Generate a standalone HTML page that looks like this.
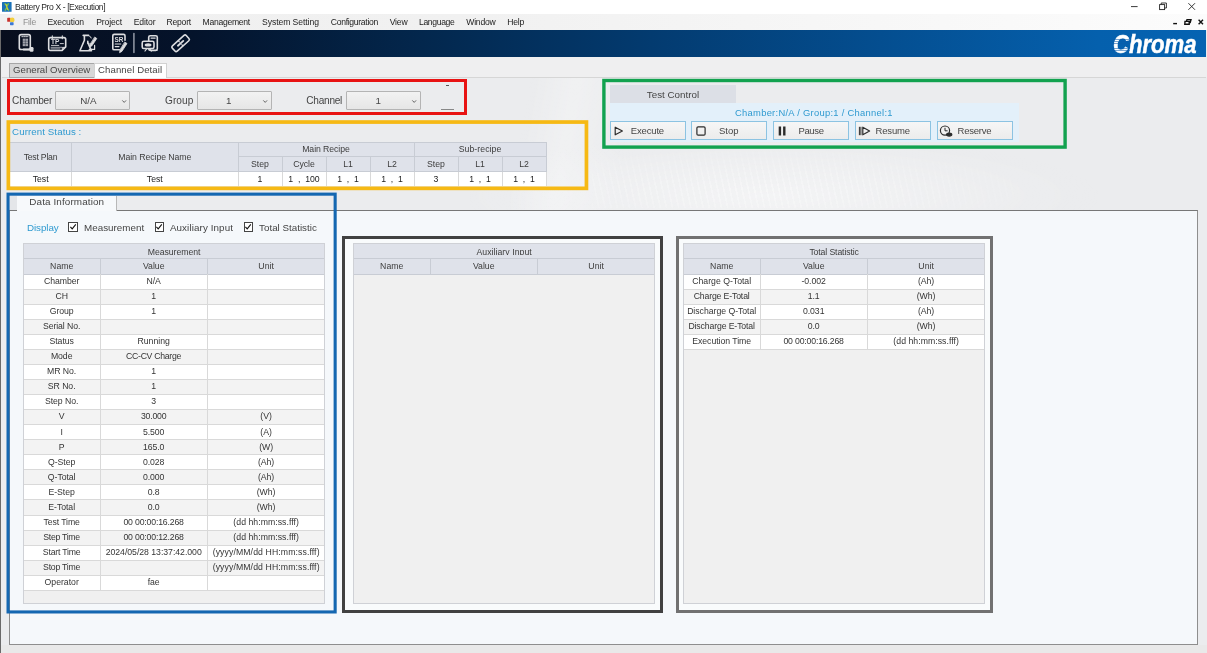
<!DOCTYPE html>
<html lang="en"><head><meta charset="utf-8"><title>Battery Pro X - [Execution]</title>
<style>
html,body{margin:0;padding:0}
body{width:1207px;height:653px;overflow:hidden;position:relative;background:#ebecee;font-family:"Liberation Sans", sans-serif;}
.a{position:absolute;box-sizing:border-box}
.t{position:absolute;white-space:pre;line-height:1;margin:0}
svg{position:absolute;overflow:visible}
</style></head><body>
<div class="a" style="left:0;top:0;width:1207px;height:653px;will-change:transform">
<div class="a" style="left:0px;top:0px;width:1207px;height:14px;background:#ffffff;"></div>
<svg style="left:1.5px;top:1.8px" width="9.6" height="9.8" viewBox="0 0 96 98"><rect width="96" height="98" rx="6" fill="#1b72b8"/><path d="M28 14 L48 44 L66 14 M30 86 L48 54 L68 86" stroke="#7fc63f" stroke-width="13" fill="none"/><path d="M40 20 L58 80" stroke="#f2d23a" stroke-width="8"/></svg>
<div class="a" style="left:0px;top:14px;width:1207px;height:16px;background:linear-gradient(90deg,#f0f0f0 0%,#f1f1f1 40%,#fcfcfc 100%);"></div>
<svg style="left:0;top:0" width="1207" height="30" viewBox="0 0 1207 30" fill="none" stroke="#222" stroke-width="0.9"><path d="M1131 6.6H1137.6"/><rect x="1159.6" y="4.6" width="5" height="5"/><path d="M1161.2 4.6V3H1166.4V8H1164.6"/><path d="M1188.4 3.2L1195 9.8M1195 3.2L1188.4 9.8"/><g stroke="#111" stroke-width="1.4"><path d="M1173.2 23.6H1177"/><path d="M1185 21.4h4.2v2.8h-4.4z M1186.4 21.2l.6-1.6h4l-.8 3h-1"/><path d="M1198.6 19.8l4.4 4.4M1203 19.8l-4.4 4.4"/></g></svg>
<svg style="left:6.5px;top:17.4px" width="8" height="9" viewBox="0 0 80 90"><rect x="2" y="8" width="34" height="40" rx="6" fill="#c9302c"/><circle cx="52" cy="30" r="24" fill="#f3cf3c"/><rect x="30" y="52" width="36" height="30" rx="6" fill="#3b78d6"/></svg>
<div class="a" style="left:1px;top:30px;width:1205px;height:27px;background:linear-gradient(90deg,#080e1d 0%,#04132b 16%,#03274d 35%,#033b70 54%,#044e90 73%,#0560ad 91%,#0563b2 100%);"></div>
<svg style="left:0;top:0" width="200" height="60" viewBox="0 0 200 60" fill="none" stroke="#dcdde0" stroke-width="1.6" stroke-linejoin="round" stroke-linecap="round">
<!-- icon1: sheet with plug -->
<rect x="19.3" y="34.6" width="11" height="14.9" rx="1.8"/>
<rect x="22.7" y="38.6" width="5.4" height="7.6" fill="#dcdde0" stroke="none" opacity=".72"/>
<path d="M22.7 41.2h5.4M22.7 43.6h5.4M25.4 38.6v7.6" stroke="#0a1428" stroke-width=".5" opacity=".7"/>
<path d="M21.8 36.7h6.2" stroke-width="1" stroke-dasharray="1 .9"/>
<path d="M23.6 49.5h6.6" stroke-width="1.8"/><rect x="29.6" y="47.1" width="3.9" height="4.6" rx="1.2" fill="#dcdde0" stroke="none"/>
<!-- icon2: TP card -->
<path d="M50.4 37.6h13.6q1.7 0 1.7 1.7v7.6l-3.6 3.6H50.4q-1.7 0-1.7-1.7v-9.5q0-1.7 1.7-1.7z"/>
<path d="M52.3 35.8v3M62.3 35.8v3" stroke-width="1.1"/>
<path d="M51.4 45.4h7.4M60.2 43.6h3.2" stroke-width=".9"/>
<path d="M51 47.3h10.6M51 48.9h9" stroke-width=".9" opacity=".8"/>
<path d="M62.3 50.2v-2.8h3" stroke-width="1"/>
<!-- icon3: flask + pen + box -->
<path d="M83.2 35.4h5.4M84.4 35.8v4.4L79.9 50.8h11.6L87.8 42.6v-1.4" />
<path d="M89.6 36.2q1.4 .2 1.6 1.8" stroke-width="1"/>
<path d="M95 37.2l1.8 1.3-5 7.4-2.2 1 .4-2.3z" fill="#dcdde0" stroke-width=".8"/>
<path d="M89 43.4h-1.2M94.6 45.4v4h-5.4" stroke-width="1.2"/>
<!-- icon4: SR doc + pen -->
<path d="M125 40.2v-4.4q0-1.4-1.4-1.4h-9.4q-1.4 0-1.4 1.4v12.6q0 1.4 1.4 1.4h5.2"/>
<path d="M115.2 44h5.6M115.2 46.6h3.8" stroke-width="1.1"/>
<path d="M125 42.2l2 1.3-5 7.8-2.4 1.4.4-2.7z" fill="#dcdde0" stroke-width=".8"/>
<!-- separator -->
<path d="M133.9 33.6v18.8" stroke="#8b92a0" stroke-width="1.6"/>
<!-- icon5: device link -->
<rect x="148.7" y="35.7" width="8.6" height="14.7" rx="1.6"/>
<path d="M151 38.1h4.2" stroke-width="1.1"/>
<rect x="142.2" y="41.3" width="11.8" height="7.2" rx="1.6" fill="#0a1428"/>
<ellipse cx="148.1" cy="44.9" rx="3.4" ry="1.7" fill="#dcdde0" stroke="none"/>
<path d="M146.8 48.7l-1.8 2.3M149.6 48.7l1.8 2.3M154 50.5h3" stroke-width="1.2"/>
<!-- icon6: chain link -->
<g transform="rotate(-42 180.6 43.3)"><rect x="171.2" y="39.7" width="18.8" height="7.2" rx="1.6"/><path d="M177 43.3h7.2" stroke-width="1.9"/><path d="M180.6 39.9v1.6M180.6 45.1v1.6" stroke-width="1.1"/></g>
<text x="55.2" y="44.4" font-family="Liberation Sans, sans-serif" font-size="6.6" font-weight="bold" fill="#dcdde0" stroke="none" text-anchor="middle">TP</text>
<text x="119" y="41.8" font-family="Liberation Sans, sans-serif" font-size="6.4" font-weight="bold" fill="#dcdde0" stroke="none" text-anchor="middle">SR</text>
</svg>
<div class="a" style="left:1112px;top:35px;width:17.5px;height:19px;z-index:5;background:repeating-linear-gradient(180deg,rgba(11,92,170,0) 0,rgba(11,92,170,0) 1.5px,rgba(11,92,170,.55) 1.5px,rgba(11,92,170,.55) 2.3px)"></div>
<div class="a" style="left:0px;top:30px;width:1.3px;height:623px;background:#6a6a6a;"></div>
<div class="a" style="left:1.3px;top:57px;width:1206px;height:20px;background:#efeff0;"></div>
<div class="a" style="left:470px;top:78px;width:737px;height:132px;background:radial-gradient(ellipse 330px 60px at 300px 118px,rgba(255,255,255,.42),rgba(255,255,255,0) 100%),linear-gradient(100deg,rgba(255,255,255,0) 8%,rgba(255,255,255,.28) 14%,rgba(255,255,255,0) 22%)"></div>
<div class="a" style="left:2px;top:77px;width:1204px;height:1px;background:#d6d6d6;"></div>
<div class="a" style="left:9px;top:63px;width:85.5px;height:14.5px;background:#d7d7d7;border:1px solid #a6a6a6;"></div>
<div class="a" style="left:94px;top:63px;width:72.5px;height:15px;background:#ffffff;border:1px solid #d2d2d2;border-bottom:none;"></div>
<div class="a" style="left:592px;top:150px;width:520px;height:58px;background:repeating-linear-gradient(78deg,rgba(255,255,255,.33) 0,rgba(255,255,255,.33) 1.6px,rgba(255,255,255,0) 1.6px,rgba(255,255,255,0) 6px);-webkit-mask-image:radial-gradient(ellipse 300px 46px at 170px 40px,#000 0%,rgba(0,0,0,.5) 55%,transparent 100%);mask-image:radial-gradient(ellipse 300px 46px at 170px 40px,#000 0%,rgba(0,0,0,.5) 55%,transparent 100%)"></div>
<div class="a" style="left:55.4px;top:91.2px;width:75px;height:19px;background:linear-gradient(180deg,#f2f2f2,#e6e6e6);border:1px solid #b4b4b4;border-radius:1px;"></div>
<svg style="left:121.60000000000001px;top:99.5px" width="4.4" height="3" viewBox="0 0 44 30"><path d="M3 4L22 24L41 4" fill="none" stroke="#444" stroke-width="8"/></svg>
<div class="a" style="left:197px;top:91.2px;width:74.5px;height:19px;background:linear-gradient(180deg,#f2f2f2,#e6e6e6);border:1px solid #b4b4b4;border-radius:1px;"></div>
<svg style="left:262.7px;top:99.5px" width="4.4" height="3" viewBox="0 0 44 30"><path d="M3 4L22 24L41 4" fill="none" stroke="#444" stroke-width="8"/></svg>
<div class="a" style="left:345.5px;top:91.2px;width:75.3px;height:19px;background:linear-gradient(180deg,#f2f2f2,#e6e6e6);border:1px solid #b4b4b4;border-radius:1px;"></div>
<svg style="left:412.0px;top:99.5px" width="4.4" height="3" viewBox="0 0 44 30"><path d="M3 4L22 24L41 4" fill="none" stroke="#444" stroke-width="8"/></svg>
<div class="a" style="left:446px;top:85px;width:3.4px;height:0.8px;background:#555;"></div>
<div class="a" style="left:441px;top:109px;width:13px;height:0.8px;background:#888;"></div>
<div class="a" style="left:7px;top:79px;width:460px;height:36px;border:3px solid #e81313;"></div>
<div class="a" style="left:10.2px;top:141.7px;width:536.8px;height:30px;background:#dfe2ea;"></div>
<div class="a" style="left:10.2px;top:171.5px;width:536.8px;height:14.6px;background:#ffffff;"></div>
<div class="a" style="left:10.2px;top:141.7px;width:536.8px;height:0.9px;background:#c8ccd4;"></div>
<div class="a" style="left:238px;top:156.2px;width:309px;height:0.9px;background:#c8ccd4;"></div>
<div class="a" style="left:10.2px;top:171.2px;width:536.8px;height:0.9px;background:#c8ccd4;"></div>
<div class="a" style="left:70.7px;top:141.7px;width:1px;height:29.80000000000001px;background:#c8ccd4;"></div>
<div class="a" style="left:70.7px;top:171.5px;width:1px;height:14.6px;background:#d9d9d9;"></div>
<div class="a" style="left:237.5px;top:141.7px;width:1px;height:29.80000000000001px;background:#c8ccd4;"></div>
<div class="a" style="left:237.5px;top:171.5px;width:1px;height:14.6px;background:#d9d9d9;"></div>
<div class="a" style="left:281.5px;top:156.4px;width:1px;height:15.099999999999994px;background:#c8ccd4;"></div>
<div class="a" style="left:281.5px;top:171.5px;width:1px;height:14.6px;background:#d9d9d9;"></div>
<div class="a" style="left:325.5px;top:156.4px;width:1px;height:15.099999999999994px;background:#c8ccd4;"></div>
<div class="a" style="left:325.5px;top:171.5px;width:1px;height:14.6px;background:#d9d9d9;"></div>
<div class="a" style="left:369.5px;top:156.4px;width:1px;height:15.099999999999994px;background:#c8ccd4;"></div>
<div class="a" style="left:369.5px;top:171.5px;width:1px;height:14.6px;background:#d9d9d9;"></div>
<div class="a" style="left:413.5px;top:141.7px;width:1px;height:29.80000000000001px;background:#c8ccd4;"></div>
<div class="a" style="left:413.5px;top:171.5px;width:1px;height:14.6px;background:#d9d9d9;"></div>
<div class="a" style="left:457.5px;top:156.4px;width:1px;height:15.099999999999994px;background:#c8ccd4;"></div>
<div class="a" style="left:457.5px;top:171.5px;width:1px;height:14.6px;background:#d9d9d9;"></div>
<div class="a" style="left:501.5px;top:156.4px;width:1px;height:15.099999999999994px;background:#c8ccd4;"></div>
<div class="a" style="left:501.5px;top:171.5px;width:1px;height:14.6px;background:#d9d9d9;"></div>
<div class="a" style="left:545.9px;top:141.7px;width:1px;height:29.80000000000001px;background:#c8ccd4;"></div>
<div class="a" style="left:545.9px;top:171.5px;width:1px;height:14.6px;background:#d9d9d9;"></div>
<svg style="left:0;top:0" width="1207" height="653" viewBox="0 0 1207 653" fill="none"><rect x="8.35" y="122.05" width="578.1" height="66.3" stroke="#f6b914" stroke-width="3.7"/></svg>
<div class="a" style="left:610px;top:85px;width:126px;height:18px;background:#dcdfe6;"></div>
<div class="a" style="left:610px;top:103px;width:408.5px;height:38.6px;background:#e3f0fa;"></div>
<div class="a" style="left:609.5px;top:121.2px;width:76px;height:19px;background:linear-gradient(180deg,#f6f6f6,#ececec);border:1px solid #8cc3e2;"></div>
<div class="a" style="left:691.25px;top:121.2px;width:76px;height:19px;background:linear-gradient(180deg,#f6f6f6,#ececec);border:1px solid #8cc3e2;"></div>
<div class="a" style="left:773px;top:121.2px;width:76px;height:19px;background:linear-gradient(180deg,#f6f6f6,#ececec);border:1px solid #8cc3e2;"></div>
<div class="a" style="left:854.75px;top:121.2px;width:76px;height:19px;background:linear-gradient(180deg,#f6f6f6,#ececec);border:1px solid #8cc3e2;"></div>
<div class="a" style="left:936.5px;top:121.2px;width:76px;height:19px;background:linear-gradient(180deg,#f6f6f6,#ececec);border:1px solid #8cc3e2;"></div>
<svg style="left:0;top:0" width="1207" height="160" viewBox="0 0 1207 160" fill="none" stroke="#2b2b2b" stroke-width="1.2" stroke-linejoin="round">
<path d="M615.2 127.2v7.6l7.2-3.8z"/>
<rect x="696.9" y="126.9" width="8.2" height="8.2" rx="1.2"/>
<path d="M779.9 126.6v8.8M784.3 126.6v8.8" stroke-width="2.4"/>
<path d="M859.4 126.8v8.4M860.9 126.8v8.4" stroke-width="1"/><path d="M862.8 127.2v7.6l6.8-3.8z"/>
<circle cx="945" cy="130.6" r="4.6"/><path d="M945 127.8v3h2.6" stroke-width="1"/><ellipse cx="949.2" cy="134.6" rx="2.6" ry="1.5" fill="#2b2b2b"/>
</svg>
<svg style="left:0;top:0" width="1207" height="653" viewBox="0 0 1207 653" fill="none"><rect x="603.9" y="80.5" width="461.2" height="66.6" stroke="#12a24f" stroke-width="3.4"/></svg>
<div class="a" style="left:9px;top:210px;width:1189.4px;height:434.8px;background:#f5f8fb;border:1px solid #8e8e8e;border-top-color:#777;"></div>
<div class="a" style="left:10px;top:195.7px;width:7px;height:14.6px;background:#e4e6e9;"></div>
<div class="a" style="left:16.7px;top:195.7px;width:100px;height:15.3px;background:#f7f9fb;border-right:1px solid #b8b8b8;"></div>
<div class="a" style="left:68.4px;top:222.4px;width:9.2px;height:9.2px;background:#fff;border:1px solid #444;"></div>
<svg style="left:70.0px;top:224.2px" width="6.2" height="5.6" viewBox="0 0 62 56"><path d="M4 28L22 48L58 4" fill="none" stroke="#111" stroke-width="11"/></svg>
<div class="a" style="left:154.6px;top:222.4px;width:9.2px;height:9.2px;background:#fff;border:1px solid #444;"></div>
<svg style="left:156.2px;top:224.2px" width="6.2" height="5.6" viewBox="0 0 62 56"><path d="M4 28L22 48L58 4" fill="none" stroke="#111" stroke-width="11"/></svg>
<div class="a" style="left:243.8px;top:222.4px;width:9.2px;height:9.2px;background:#fff;border:1px solid #444;"></div>
<svg style="left:245.4px;top:224.2px" width="6.2" height="5.6" viewBox="0 0 62 56"><path d="M4 28L22 48L58 4" fill="none" stroke="#111" stroke-width="11"/></svg>
<div class="a" style="left:341.8px;top:235.8px;width:321.4px;height:377.5px;background:#f9fbfc;border:3px solid #414141;"></div>
<div class="a" style="left:676px;top:235.8px;width:316.6px;height:377.5px;background:#f9fbfc;border:3px solid #717171;"></div>
<div class="a" style="left:23.4px;top:243.4px;width:301.4px;height:360.20000000000005px;background:#f0f0f0;"></div>
<div class="a" style="left:23.4px;top:243.4px;width:301.4px;height:30.799999999999983px;background:#dfe2ea;"></div>
<div class="a" style="left:23.4px;top:274.2px;width:301.4px;height:15.05px;background:#ffffff;"></div>
<div class="a" style="left:23.4px;top:289.25px;width:301.4px;height:15.05px;background:#f3f3f3;"></div>
<div class="a" style="left:23.4px;top:304.3px;width:301.4px;height:15.05px;background:#ffffff;"></div>
<div class="a" style="left:23.4px;top:319.35px;width:301.4px;height:15.05px;background:#f3f3f3;"></div>
<div class="a" style="left:23.4px;top:334.4px;width:301.4px;height:15.05px;background:#ffffff;"></div>
<div class="a" style="left:23.4px;top:349.45px;width:301.4px;height:15.05px;background:#f3f3f3;"></div>
<div class="a" style="left:23.4px;top:364.5px;width:301.4px;height:15.05px;background:#ffffff;"></div>
<div class="a" style="left:23.4px;top:379.55px;width:301.4px;height:15.05px;background:#f3f3f3;"></div>
<div class="a" style="left:23.4px;top:394.6px;width:301.4px;height:15.05px;background:#ffffff;"></div>
<div class="a" style="left:23.4px;top:409.65px;width:301.4px;height:15.05px;background:#f3f3f3;"></div>
<div class="a" style="left:23.4px;top:424.7px;width:301.4px;height:15.05px;background:#ffffff;"></div>
<div class="a" style="left:23.4px;top:439.75px;width:301.4px;height:15.05px;background:#f3f3f3;"></div>
<div class="a" style="left:23.4px;top:454.8px;width:301.4px;height:15.05px;background:#ffffff;"></div>
<div class="a" style="left:23.4px;top:469.85px;width:301.4px;height:15.05px;background:#f3f3f3;"></div>
<div class="a" style="left:23.4px;top:484.9px;width:301.4px;height:15.05px;background:#ffffff;"></div>
<div class="a" style="left:23.4px;top:499.95px;width:301.4px;height:15.05px;background:#f3f3f3;"></div>
<div class="a" style="left:23.4px;top:515.0px;width:301.4px;height:15.05px;background:#ffffff;"></div>
<div class="a" style="left:23.4px;top:530.05px;width:301.4px;height:15.05px;background:#f3f3f3;"></div>
<div class="a" style="left:23.4px;top:545.1px;width:301.4px;height:15.05px;background:#ffffff;"></div>
<div class="a" style="left:23.4px;top:560.15px;width:301.4px;height:15.05px;background:#f3f3f3;"></div>
<div class="a" style="left:23.4px;top:575.2px;width:301.4px;height:15.05px;background:#ffffff;"></div>
<div class="a" style="left:23.4px;top:258.3px;width:301.4px;height:1px;background:#c8ccd4;"></div>
<div class="a" style="left:23.4px;top:273.7px;width:301.4px;height:1px;background:#c8ccd4;"></div>
<div class="a" style="left:99.5px;top:258.8px;width:1px;height:15.399999999999977px;background:#c8ccd4;"></div>
<div class="a" style="left:99.5px;top:274.2px;width:1px;height:316.05px;background:#d9d9d9;"></div>
<div class="a" style="left:206.9px;top:258.8px;width:1px;height:15.399999999999977px;background:#c8ccd4;"></div>
<div class="a" style="left:206.9px;top:274.2px;width:1px;height:316.05px;background:#d9d9d9;"></div>
<div class="a" style="left:23.4px;top:288.75px;width:301.4px;height:1px;background:#d9d9d9;"></div>
<div class="a" style="left:23.4px;top:303.8px;width:301.4px;height:1px;background:#d9d9d9;"></div>
<div class="a" style="left:23.4px;top:318.85px;width:301.4px;height:1px;background:#d9d9d9;"></div>
<div class="a" style="left:23.4px;top:333.9px;width:301.4px;height:1px;background:#d9d9d9;"></div>
<div class="a" style="left:23.4px;top:348.95px;width:301.4px;height:1px;background:#d9d9d9;"></div>
<div class="a" style="left:23.4px;top:364.0px;width:301.4px;height:1px;background:#d9d9d9;"></div>
<div class="a" style="left:23.4px;top:379.05px;width:301.4px;height:1px;background:#d9d9d9;"></div>
<div class="a" style="left:23.4px;top:394.1px;width:301.4px;height:1px;background:#d9d9d9;"></div>
<div class="a" style="left:23.4px;top:409.15px;width:301.4px;height:1px;background:#d9d9d9;"></div>
<div class="a" style="left:23.4px;top:424.2px;width:301.4px;height:1px;background:#d9d9d9;"></div>
<div class="a" style="left:23.4px;top:439.25px;width:301.4px;height:1px;background:#d9d9d9;"></div>
<div class="a" style="left:23.4px;top:454.3px;width:301.4px;height:1px;background:#d9d9d9;"></div>
<div class="a" style="left:23.4px;top:469.35px;width:301.4px;height:1px;background:#d9d9d9;"></div>
<div class="a" style="left:23.4px;top:484.4px;width:301.4px;height:1px;background:#d9d9d9;"></div>
<div class="a" style="left:23.4px;top:499.45px;width:301.4px;height:1px;background:#d9d9d9;"></div>
<div class="a" style="left:23.4px;top:514.5px;width:301.4px;height:1px;background:#d9d9d9;"></div>
<div class="a" style="left:23.4px;top:529.55px;width:301.4px;height:1px;background:#d9d9d9;"></div>
<div class="a" style="left:23.4px;top:544.6px;width:301.4px;height:1px;background:#d9d9d9;"></div>
<div class="a" style="left:23.4px;top:559.65px;width:301.4px;height:1px;background:#d9d9d9;"></div>
<div class="a" style="left:23.4px;top:574.7px;width:301.4px;height:1px;background:#d9d9d9;"></div>
<div class="a" style="left:23.4px;top:589.75px;width:301.4px;height:1px;background:#d9d9d9;"></div>
<div class="a" style="left:22.9px;top:242.9px;width:302.4px;height:361.20000000000005px;border:1px solid #cfd1d6;"></div>
<div class="a" style="left:23.4px;top:244.4px;width:301.4px;height:11.10px;overflow:hidden"><span class="t" style="left:0;width:100%;text-align:center;top:3.24px;font-size:8.7px;color:#3c3c3c;letter-spacing:-0.05px">Measurement</span></div>
<div class="a" style="left:353.4px;top:243.4px;width:301.4px;height:360.20000000000005px;background:#f0f0f0;"></div>
<div class="a" style="left:353.4px;top:243.4px;width:301.4px;height:30.799999999999983px;background:#dfe2ea;"></div>
<div class="a" style="left:353.4px;top:258.3px;width:301.4px;height:1px;background:#c8ccd4;"></div>
<div class="a" style="left:353.4px;top:273.7px;width:301.4px;height:1px;background:#c8ccd4;"></div>
<div class="a" style="left:429.5px;top:258.8px;width:1px;height:15.399999999999977px;background:#c8ccd4;"></div>
<div class="a" style="left:536.9px;top:258.8px;width:1px;height:15.399999999999977px;background:#c8ccd4;"></div>
<div class="a" style="left:352.9px;top:242.9px;width:302.4px;height:361.20000000000005px;border:1px solid #cfd1d6;"></div>
<div class="a" style="left:353.4px;top:244.4px;width:301.4px;height:11.10px;overflow:hidden"><span class="t" style="left:0;width:100%;text-align:center;top:3.24px;font-size:8.7px;color:#3c3c3c;letter-spacing:0.05px">Auxiliary Input</span></div>
<div class="a" style="left:683.4px;top:243.4px;width:301.4px;height:360.20000000000005px;background:#f0f0f0;"></div>
<div class="a" style="left:683.4px;top:243.4px;width:301.4px;height:30.799999999999983px;background:#dfe2ea;"></div>
<div class="a" style="left:683.4px;top:274.2px;width:301.4px;height:15.05px;background:#ffffff;"></div>
<div class="a" style="left:683.4px;top:289.25px;width:301.4px;height:15.05px;background:#f3f3f3;"></div>
<div class="a" style="left:683.4px;top:304.3px;width:301.4px;height:15.05px;background:#ffffff;"></div>
<div class="a" style="left:683.4px;top:319.35px;width:301.4px;height:15.05px;background:#f3f3f3;"></div>
<div class="a" style="left:683.4px;top:334.4px;width:301.4px;height:15.05px;background:#ffffff;"></div>
<div class="a" style="left:683.4px;top:258.3px;width:301.4px;height:1px;background:#c8ccd4;"></div>
<div class="a" style="left:683.4px;top:273.7px;width:301.4px;height:1px;background:#c8ccd4;"></div>
<div class="a" style="left:759.5px;top:258.8px;width:1px;height:15.399999999999977px;background:#c8ccd4;"></div>
<div class="a" style="left:759.5px;top:274.2px;width:1px;height:75.25px;background:#d9d9d9;"></div>
<div class="a" style="left:866.9px;top:258.8px;width:1px;height:15.399999999999977px;background:#c8ccd4;"></div>
<div class="a" style="left:866.9px;top:274.2px;width:1px;height:75.25px;background:#d9d9d9;"></div>
<div class="a" style="left:683.4px;top:288.75px;width:301.4px;height:1px;background:#d9d9d9;"></div>
<div class="a" style="left:683.4px;top:303.8px;width:301.4px;height:1px;background:#d9d9d9;"></div>
<div class="a" style="left:683.4px;top:318.85px;width:301.4px;height:1px;background:#d9d9d9;"></div>
<div class="a" style="left:683.4px;top:333.9px;width:301.4px;height:1px;background:#d9d9d9;"></div>
<div class="a" style="left:683.4px;top:348.95px;width:301.4px;height:1px;background:#d9d9d9;"></div>
<div class="a" style="left:682.9px;top:242.9px;width:302.4px;height:361.20000000000005px;border:1px solid #cfd1d6;"></div>
<div class="a" style="left:683.4px;top:244.4px;width:301.4px;height:11.10px;overflow:hidden"><span class="t" style="left:0;width:100%;text-align:center;top:3.24px;font-size:8.7px;color:#3c3c3c;letter-spacing:-0.12px">Total Statistic</span></div>
<svg style="left:0;top:0" width="1207" height="653" viewBox="0 0 1207 653" fill="none"><rect x="8.05" y="194.15" width="327.1" height="417.8" stroke="#1467b1" stroke-width="3.1"/></svg>
<div class="a" style="left:1.3px;top:645px;width:1206px;height:8px;background:#e9e9e9;"></div>
<span class="t" style="left:14.90px;top:3.12px;font-size:8.6px;color:#2a2a2a;letter-spacing:-0.406px;">Battery Pro X - [Execution]</span>
<span class="t" style="left:22.90px;top:17.62px;font-size:8.6px;color:#8d8d8d;letter-spacing:-0.190px;">File</span>
<span class="t" style="left:47.50px;top:17.62px;font-size:8.6px;color:#1c1c1c;letter-spacing:-0.139px;">Execution</span>
<span class="t" style="left:96.20px;top:17.62px;font-size:8.6px;color:#1c1c1c;letter-spacing:-0.136px;">Project</span>
<span class="t" style="left:133.70px;top:17.62px;font-size:8.6px;color:#1c1c1c;letter-spacing:-0.109px;">Editor</span>
<span class="t" style="left:166.50px;top:17.62px;font-size:8.6px;color:#1c1c1c;letter-spacing:-0.216px;">Report</span>
<span class="t" style="left:202.60px;top:17.62px;font-size:8.6px;color:#1c1c1c;letter-spacing:-0.277px;">Management</span>
<span class="t" style="left:262.00px;top:17.62px;font-size:8.6px;color:#1c1c1c;letter-spacing:-0.064px;">System Setting</span>
<span class="t" style="left:330.80px;top:17.62px;font-size:8.6px;color:#1c1c1c;letter-spacing:-0.302px;">Configuration</span>
<span class="t" style="left:389.70px;top:17.62px;font-size:8.6px;color:#1c1c1c;letter-spacing:-0.171px;">View</span>
<span class="t" style="left:419.00px;top:17.62px;font-size:8.6px;color:#1c1c1c;letter-spacing:-0.344px;">Language</span>
<span class="t" style="left:466.30px;top:17.62px;font-size:8.6px;color:#1c1c1c;letter-spacing:-0.230px;">Window</span>
<span class="t" style="left:507.30px;top:17.62px;font-size:8.6px;color:#1c1c1c;letter-spacing:-0.247px;">Help</span>
<span class="t" style="left:1113.20px;top:32.04px;font-size:25px;color:#ffffff;font-weight:bold;font-style:italic;transform:scaleX(.885);transform-origin:0 0;-webkit-text-stroke:.5px #fff;">Chroma</span>
<span class="t" style="left:13.10px;top:64.77px;font-size:9.6px;color:#454545;letter-spacing:0.020px;">General Overview</span>
<span class="t" style="left:98.10px;top:64.77px;font-size:9.6px;color:#454545;letter-spacing:0.083px;">Channel Detail</span>
<span class="t" style="left:12.10px;top:95.95px;font-size:10.1px;color:#454545;letter-spacing:-0.217px;">Chamber</span>
<span class="t" style="left:80.13px;top:96.10px;font-size:9.8px;color:#454545;">N/A</span>
<span class="t" style="left:165.00px;top:95.95px;font-size:10.1px;color:#454545;letter-spacing:0.048px;">Group</span>
<span class="t" style="left:226.07px;top:96.10px;font-size:9.8px;color:#454545;">1</span>
<span class="t" style="left:306.30px;top:95.95px;font-size:10.1px;color:#454545;letter-spacing:-0.258px;">Channel</span>
<span class="t" style="left:375.57px;top:96.10px;font-size:9.8px;color:#454545;">1</span>
<span class="t" style="left:12.10px;top:127.39px;font-size:9.7px;color:#2f9ad0;letter-spacing:0.091px;">Current Status :</span>
<span class="t" style="left:23.64px;top:152.54px;font-size:8.7px;color:#3c3c3c;letter-spacing:-0.226px;">Test Plan</span>
<span class="t" style="left:118.27px;top:152.54px;font-size:8.7px;color:#3c3c3c;letter-spacing:-0.055px;">Main Recipe Name</span>
<span class="t" style="left:302.21px;top:145.04px;font-size:8.7px;color:#3c3c3c;letter-spacing:-0.072px;">Main Recipe</span>
<span class="t" style="left:458.77px;top:145.04px;font-size:8.7px;color:#3c3c3c;letter-spacing:0.048px;">Sub-recipe</span>
<span class="t" style="left:251.06px;top:159.64px;font-size:8.7px;color:#3c3c3c;">Step</span>
<span class="t" style="left:293.13px;top:159.64px;font-size:8.7px;color:#3c3c3c;">Cycle</span>
<span class="t" style="left:343.16px;top:159.64px;font-size:8.7px;color:#3c3c3c;">L1</span>
<span class="t" style="left:387.16px;top:159.64px;font-size:8.7px;color:#3c3c3c;">L2</span>
<span class="t" style="left:427.06px;top:159.64px;font-size:8.7px;color:#3c3c3c;">Step</span>
<span class="t" style="left:475.16px;top:159.64px;font-size:8.7px;color:#3c3c3c;">L1</span>
<span class="t" style="left:519.16px;top:159.64px;font-size:8.7px;color:#3c3c3c;">L2</span>
<span class="t" style="left:32.63px;top:174.64px;font-size:8.7px;color:#222;">Test</span>
<span class="t" style="left:146.83px;top:174.64px;font-size:8.7px;color:#222;">Test</span>
<span class="t" style="left:257.58px;top:174.64px;font-size:8.7px;color:#222;">1</span>
<span class="t" style="left:288.30px;top:174.64px;font-size:8.7px;color:#222;">1  ,  100</span>
<span class="t" style="left:337.13px;top:174.64px;font-size:8.7px;color:#222;">1  ,  1</span>
<span class="t" style="left:381.13px;top:174.64px;font-size:8.7px;color:#222;">1  ,  1</span>
<span class="t" style="left:433.58px;top:174.64px;font-size:8.7px;color:#222;">3</span>
<span class="t" style="left:469.13px;top:174.64px;font-size:8.7px;color:#222;">1  ,  1</span>
<span class="t" style="left:513.13px;top:174.64px;font-size:8.7px;color:#222;">1  ,  1</span>
<span class="t" style="left:646.80px;top:89.50px;font-size:9.8px;color:#454545;letter-spacing:0.010px;">Test Control</span>
<span class="t" style="left:735.00px;top:107.74px;font-size:9.4px;color:#2f9ad0;letter-spacing:0.281px;">Chamber:N/A / Group:1 / Channel:1</span>
<span class="t" style="left:630.80px;top:125.66px;font-size:9.5px;color:#454545;letter-spacing:-0.161px;">Execute</span>
<span class="t" style="left:719.00px;top:125.66px;font-size:9.5px;color:#454545;letter-spacing:0.038px;">Stop</span>
<span class="t" style="left:798.40px;top:125.66px;font-size:9.5px;color:#454545;letter-spacing:-0.327px;">Pause</span>
<span class="t" style="left:875.60px;top:125.66px;font-size:9.5px;color:#454545;letter-spacing:-0.196px;">Resume</span>
<span class="t" style="left:957.60px;top:125.66px;font-size:9.5px;color:#454545;letter-spacing:-0.254px;">Reserve</span>
<span class="t" style="left:29.30px;top:197.02px;font-size:9.9px;color:#454545;letter-spacing:0.118px;">Data Information</span>
<span class="t" style="left:27.00px;top:222.90px;font-size:9.8px;color:#2f9ad0;letter-spacing:-0.075px;">Display</span>
<span class="t" style="left:84.00px;top:222.90px;font-size:9.8px;color:#454545;letter-spacing:0.027px;">Measurement</span>
<span class="t" style="left:169.90px;top:222.90px;font-size:9.8px;color:#454545;letter-spacing:0.110px;">Auxiliary Input</span>
<span class="t" style="left:259.10px;top:222.90px;font-size:9.8px;color:#454545;letter-spacing:-0.001px;">Total Statistic</span>
<span class="t" style="left:50.11px;top:261.84px;font-size:8.7px;color:#3c3c3c;">Name</span>
<span class="t" style="left:142.91px;top:261.84px;font-size:8.7px;color:#3c3c3c;">Value</span>
<span class="t" style="left:258.37px;top:261.84px;font-size:8.7px;color:#3c3c3c;">Unit</span>
<span class="t" style="left:43.98px;top:277.04px;font-size:8.7px;color:#343434;letter-spacing:-0.048px;">Chamber</span>
<span class="t" style="left:146.51px;top:277.04px;font-size:8.7px;color:#343434;letter-spacing:-0.050px;">N/A</span>
<span class="t" style="left:55.44px;top:292.09px;font-size:8.7px;color:#343434;letter-spacing:-0.050px;">CH</span>
<span class="t" style="left:151.28px;top:292.09px;font-size:8.7px;color:#343434;letter-spacing:-0.050px;">1</span>
<span class="t" style="left:49.72px;top:307.14px;font-size:8.7px;color:#343434;letter-spacing:-0.050px;">Group</span>
<span class="t" style="left:151.28px;top:307.14px;font-size:8.7px;color:#343434;letter-spacing:-0.050px;">1</span>
<span class="t" style="left:42.92px;top:322.19px;font-size:8.7px;color:#343434;letter-spacing:-0.066px;">Serial No.</span>
<span class="t" style="left:49.50px;top:337.24px;font-size:8.7px;color:#343434;letter-spacing:-0.050px;">Status</span>
<span class="t" style="left:137.46px;top:337.24px;font-size:8.7px;color:#343434;letter-spacing:0.018px;">Running</span>
<span class="t" style="left:50.91px;top:352.29px;font-size:8.7px;color:#343434;letter-spacing:-0.050px;">Mode</span>
<span class="t" style="left:126.06px;top:352.29px;font-size:8.7px;color:#343434;letter-spacing:-0.285px;">CC-CV Charge</span>
<span class="t" style="left:47.10px;top:367.34px;font-size:8.7px;color:#343434;letter-spacing:-0.050px;">MR No.</span>
<span class="t" style="left:151.28px;top:367.34px;font-size:8.7px;color:#343434;letter-spacing:-0.050px;">1</span>
<span class="t" style="left:47.82px;top:382.39px;font-size:8.7px;color:#343434;letter-spacing:-0.050px;">SR No.</span>
<span class="t" style="left:151.28px;top:382.39px;font-size:8.7px;color:#343434;letter-spacing:-0.050px;">1</span>
<span class="t" style="left:44.97px;top:397.44px;font-size:8.7px;color:#343434;letter-spacing:-0.052px;">Step No.</span>
<span class="t" style="left:151.28px;top:397.44px;font-size:8.7px;color:#343434;letter-spacing:-0.050px;">3</span>
<span class="t" style="left:58.80px;top:412.49px;font-size:8.7px;color:#343434;letter-spacing:-0.050px;">V</span>
<span class="t" style="left:140.90px;top:412.49px;font-size:8.7px;color:#343434;letter-spacing:-0.196px;">30.000</span>
<span class="t" style="left:260.35px;top:412.49px;font-size:8.7px;color:#343434;letter-spacing:-0.050px;">(V)</span>
<span class="t" style="left:60.49px;top:427.54px;font-size:8.7px;color:#343434;letter-spacing:-0.050px;">I</span>
<span class="t" style="left:142.92px;top:427.54px;font-size:8.7px;color:#343434;letter-spacing:-0.050px;">5.500</span>
<span class="t" style="left:260.35px;top:427.54px;font-size:8.7px;color:#343434;letter-spacing:-0.050px;">(A)</span>
<span class="t" style="left:58.80px;top:442.59px;font-size:8.7px;color:#343434;letter-spacing:-0.050px;">P</span>
<span class="t" style="left:142.92px;top:442.59px;font-size:8.7px;color:#343434;letter-spacing:-0.050px;">165.0</span>
<span class="t" style="left:259.15px;top:442.59px;font-size:8.7px;color:#343434;letter-spacing:-0.050px;">(W)</span>
<span class="t" style="left:47.99px;top:457.64px;font-size:8.7px;color:#343434;letter-spacing:-0.022px;">Q-Step</span>
<span class="t" style="left:142.92px;top:457.64px;font-size:8.7px;color:#343434;letter-spacing:-0.050px;">0.028</span>
<span class="t" style="left:258.05px;top:457.64px;font-size:8.7px;color:#343434;letter-spacing:-0.105px;">(Ah)</span>
<span class="t" style="left:47.85px;top:472.69px;font-size:8.7px;color:#343434;letter-spacing:-0.050px;">Q-Total</span>
<span class="t" style="left:142.92px;top:472.69px;font-size:8.7px;color:#343434;letter-spacing:-0.050px;">0.000</span>
<span class="t" style="left:258.05px;top:472.69px;font-size:8.7px;color:#343434;letter-spacing:-0.105px;">(Ah)</span>
<span class="t" style="left:48.54px;top:487.74px;font-size:8.7px;color:#343434;letter-spacing:-0.050px;">E-Step</span>
<span class="t" style="left:147.71px;top:487.74px;font-size:8.7px;color:#343434;letter-spacing:-0.050px;">0.8</span>
<span class="t" style="left:256.81px;top:487.74px;font-size:8.7px;color:#343434;letter-spacing:-0.082px;">(Wh)</span>
<span class="t" style="left:48.33px;top:502.79px;font-size:8.7px;color:#343434;letter-spacing:-0.050px;">E-Total</span>
<span class="t" style="left:147.71px;top:502.79px;font-size:8.7px;color:#343434;letter-spacing:-0.050px;">0.0</span>
<span class="t" style="left:256.81px;top:502.79px;font-size:8.7px;color:#343434;letter-spacing:-0.082px;">(Wh)</span>
<span class="t" style="left:43.55px;top:517.84px;font-size:8.7px;color:#343434;letter-spacing:-0.108px;">Test Time</span>
<span class="t" style="left:123.42px;top:517.84px;font-size:8.7px;color:#343434;letter-spacing:-0.161px;">00 00:00:16.268</span>
<span class="t" style="left:233.32px;top:517.84px;font-size:8.7px;color:#343434;letter-spacing:0.044px;">(dd hh:mm:ss.fff)</span>
<span class="t" style="left:43.30px;top:532.89px;font-size:8.7px;color:#343434;letter-spacing:-0.292px;">Step Time</span>
<span class="t" style="left:123.42px;top:532.89px;font-size:8.7px;color:#343434;letter-spacing:-0.161px;">00 00:00:12.268</span>
<span class="t" style="left:233.32px;top:532.89px;font-size:8.7px;color:#343434;letter-spacing:0.044px;">(dd hh:mm:ss.fff)</span>
<span class="t" style="left:42.85px;top:547.94px;font-size:8.7px;color:#343434;letter-spacing:-0.209px;">Start Time</span>
<span class="t" style="left:105.69px;top:547.94px;font-size:8.7px;color:#343434;letter-spacing:-0.027px;">2024/05/28 13:37:42.000</span>
<span class="t" style="left:212.65px;top:547.94px;font-size:8.7px;color:#343434;letter-spacing:0.103px;">(yyyy/MM/dd HH:mm:ss.fff)</span>
<span class="t" style="left:43.08px;top:562.99px;font-size:8.7px;color:#343434;letter-spacing:-0.236px;">Stop Time</span>
<span class="t" style="left:212.65px;top:562.99px;font-size:8.7px;color:#343434;letter-spacing:0.103px;">(yyyy/MM/dd HH:mm:ss.fff)</span>
<span class="t" style="left:44.59px;top:578.04px;font-size:8.7px;color:#343434;letter-spacing:-0.012px;">Operator</span>
<span class="t" style="left:147.71px;top:578.04px;font-size:8.7px;color:#343434;letter-spacing:-0.050px;">fae</span>
<span class="t" style="left:380.11px;top:261.84px;font-size:8.7px;color:#3c3c3c;">Name</span>
<span class="t" style="left:472.91px;top:261.84px;font-size:8.7px;color:#3c3c3c;">Value</span>
<span class="t" style="left:588.37px;top:261.84px;font-size:8.7px;color:#3c3c3c;">Unit</span>
<span class="t" style="left:710.11px;top:261.84px;font-size:8.7px;color:#3c3c3c;">Name</span>
<span class="t" style="left:802.91px;top:261.84px;font-size:8.7px;color:#3c3c3c;">Value</span>
<span class="t" style="left:918.37px;top:261.84px;font-size:8.7px;color:#3c3c3c;">Unit</span>
<span class="t" style="left:692.25px;top:277.04px;font-size:8.7px;color:#343434;letter-spacing:-0.002px;">Charge Q-Total</span>
<span class="t" style="left:801.50px;top:277.04px;font-size:8.7px;color:#343434;letter-spacing:-0.050px;">-0.002</span>
<span class="t" style="left:918.05px;top:277.04px;font-size:8.7px;color:#343434;letter-spacing:-0.105px;">(Ah)</span>
<span class="t" style="left:693.63px;top:292.09px;font-size:8.7px;color:#343434;letter-spacing:-0.140px;">Charge E-Total</span>
<span class="t" style="left:807.71px;top:292.09px;font-size:8.7px;color:#343434;letter-spacing:-0.050px;">1.1</span>
<span class="t" style="left:916.81px;top:292.09px;font-size:8.7px;color:#343434;letter-spacing:-0.082px;">(Wh)</span>
<span class="t" style="left:687.14px;top:307.14px;font-size:8.7px;color:#343434;letter-spacing:-0.025px;">Discharge Q-Total</span>
<span class="t" style="left:802.93px;top:307.14px;font-size:8.7px;color:#343434;letter-spacing:-0.050px;">0.031</span>
<span class="t" style="left:918.05px;top:307.14px;font-size:8.7px;color:#343434;letter-spacing:-0.105px;">(Ah)</span>
<span class="t" style="left:688.39px;top:322.19px;font-size:8.7px;color:#343434;letter-spacing:-0.121px;">Discharge E-Total</span>
<span class="t" style="left:807.71px;top:322.19px;font-size:8.7px;color:#343434;letter-spacing:-0.050px;">0.0</span>
<span class="t" style="left:916.81px;top:322.19px;font-size:8.7px;color:#343434;letter-spacing:-0.082px;">(Wh)</span>
<span class="t" style="left:692.23px;top:337.24px;font-size:8.7px;color:#343434;letter-spacing:-0.036px;">Execution Time</span>
<span class="t" style="left:783.42px;top:337.24px;font-size:8.7px;color:#343434;letter-spacing:-0.161px;">00 00:00:16.268</span>
<span class="t" style="left:893.32px;top:337.24px;font-size:8.7px;color:#343434;letter-spacing:0.044px;">(dd hh:mm:ss.fff)</span>
</div>
</body></html>
